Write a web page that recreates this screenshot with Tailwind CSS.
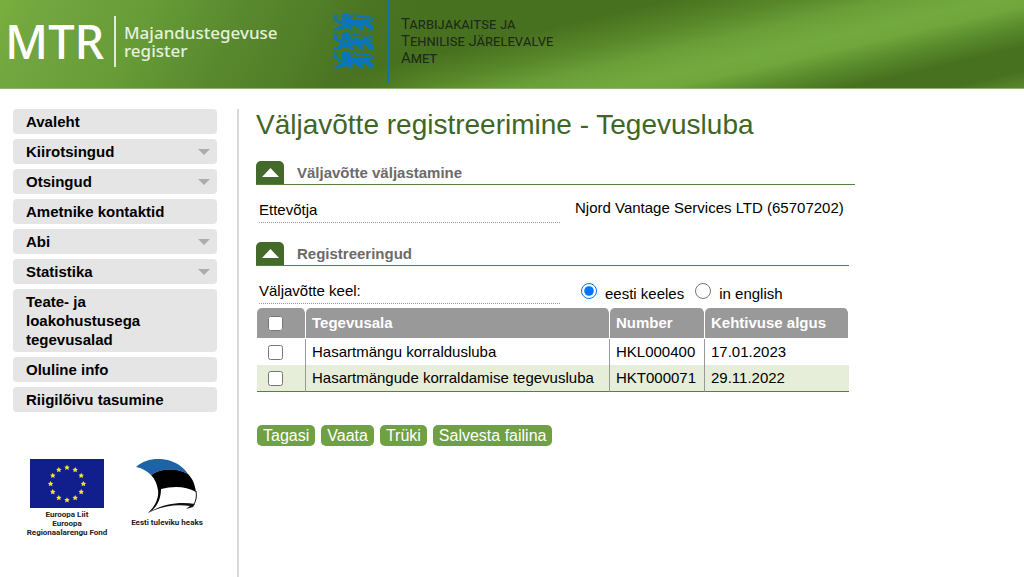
<!DOCTYPE html>
<html lang="et">

<head>
    <meta charset="UTF-8">
    <meta name="viewport" content="width=device-width, initial-scale=1.0">
    <title>Väljavõtte registreerimine - MTR</title>
    <script src="https://cdn.jsdelivr.net/npm/@tailwindcss/browser@4"></script>
</head>

<body class="min-h-screen flex flex-col bg-white text-black font-['Liberation_Sans',Arial,sans-serif] text-[15px]">

    <header class="relative h-[89px] border-b border-[#8fb573]">
        <svg class="absolute inset-0 w-full h-full" viewBox="0 0 1024 88" preserveAspectRatio="none" aria-hidden="true">
            <defs>
                <linearGradient id="band" gradientUnits="userSpaceOnUse" x1="0" y1="0" x2="75" y2="322">
                    <stop offset="0" stop-color="#48711f" />
                    <stop offset=".46" stop-color="#48711f" />
                    <stop offset=".54" stop-color="#588629" />
                    <stop offset=".61" stop-color="#6a9f38" />
                    <stop offset=".68" stop-color="#73aa3f" />
                    <stop offset=".72" stop-color="#70a63b" />
                    <stop offset=".78" stop-color="#588a2c" />
                    <stop offset=".84" stop-color="#48711f" />
                    <stop offset=".91" stop-color="#48711f" />
                    <stop offset="1" stop-color="#669a37" />
                </linearGradient>
                <linearGradient id="glow" gradientUnits="userSpaceOnUse" x1="0" y1="0" x2="368" y2="184">
                    <stop offset="0" stop-color="#78b03c" />
                    <stop offset=".1" stop-color="#71a640" />
                    <stop offset=".34" stop-color="#669b36" />
                    <stop offset=".54" stop-color="#59892e" />
                    <stop offset=".7" stop-color="#517e28" />
                    <stop offset=".8" stop-color="#4b7522" />
                    <stop offset="1" stop-color="#48711f" stop-opacity="0" />
                </linearGradient>
            </defs>
            <rect width="1024" height="88" fill="url(#band)" />
            <rect width="1024" height="88" fill="url(#glow)" />
        </svg>
        <div class="relative flex h-full">
            <a href="#" class="flex items-start w-[332px] pl-[5px] pt-4 text-white font-['Noto_Sans',sans-serif]">
                <span class="w-[109px] font-medium text-[47px] leading-[50px]">MTR</span>
                <span class="w-[2px] h-[51px] bg-white/80"></span>
                <span class="flex flex-col pl-2 pt-2 font-medium text-[17px] leading-[18px] text-[#e6f0dc]">
                    <span>Majandustegevuse</span>
                    <span>register</span>
                </span>
            </a>
            <a href="#" class="flex items-start text-[#1f2a1a]">
                <svg class="w-[43px] h-[58px] mt-3" viewBox="0 0 43 58" fill="#0a76b8" stroke="#0a76b8" stroke-linecap="round" stroke-linejoin="round" aria-hidden="true">
                    <defs>
                        <g id="lion">
                            <path stroke="none" d="M9 4 10.500 2 14 1 17.500 2 19 5 18.800 8 24 7 29 8 34 6.500 37.500 8 38.500 11.500 41.500 14.500 42 18.300 36 18.300 37 16.500 34 14.500 32 13 30 14 31.500 16 31.500 18.300 26.500 18.300 27 16.500 24 14.500 20.500 14 20.500 16.500 23 18.300 17 18.300 16.500 16 12.500 16.500 7.500 18.300 1 18.300 2 16.500 5.500 16 7 13.500 10.500 12.500 7.500 12 4.500 10 1 7.500 2 5 4.500 6 6.500 8.500 9 9Z" />
                            <path fill="none" stroke-width="1.500" d="M37.500 9C41.500 9.500 41.500 6 38 5 33 4 27 5.500 22.500 3M20.500 4 23 2M2 2.500 3.500 5.500M5.500 2.500 5 6" />
                            <path fill="none" stroke="#4a7322" stroke-width=".6" d="M11.800 5h1.200M15 5h1.200M12.800 9.500h2.500M19.500 9v4M9.500 10.500l2 1.500" />
                        </g>
                    </defs>
                    <use href="#lion" />
                    <use href="#lion" y="19" />
                    <use href="#lion" y="38" />
                </svg>
                <span class="w-[2px] h-[83px] ml-3 bg-[#0a76b8]"></span>
                <span class="pl-3 pt-4 font-['Roboto',sans-serif] text-[15px] leading-[17px] [font-variant:small-caps]">Tarbijakaitse ja<br>Tehnilise Järelevalve<br>Amet</span>
            </a>
        </div>
    </header>

    <div class="flex flex-1 pt-5">
        <aside class="w-[237px] shrink-0 pl-[13px] pr-5">
            <nav>
                <ul class="flex flex-col gap-[5px] font-bold leading-[19px]">
                    <li><a href="#" class="block rounded-[4px] bg-[#e5e5e5] py-[3px] pl-[13px] pr-2">Avaleht</a></li>
                    <li><a href="#" class="flex items-center justify-between rounded-[4px] bg-[#e5e5e5] py-[3px] pl-[13px] pr-[7px]">Kiirotsingud
                            <svg class="w-3 h-[6px]" viewBox="0 0 12 6"><path fill="#adadad" d="M0 0h12L6 6z" /></svg></a></li>
                    <li><a href="#" class="flex items-center justify-between rounded-[4px] bg-[#e5e5e5] py-[3px] pl-[13px] pr-[7px]">Otsingud
                            <svg class="w-3 h-[6px]" viewBox="0 0 12 6"><path fill="#adadad" d="M0 0h12L6 6z" /></svg></a></li>
                    <li><a href="#" class="block rounded-[4px] bg-[#e5e5e5] py-[3px] pl-[13px] pr-2">Ametnike kontaktid</a></li>
                    <li><a href="#" class="flex items-center justify-between rounded-[4px] bg-[#e5e5e5] py-[3px] pl-[13px] pr-[7px]">Abi
                            <svg class="w-3 h-[6px]" viewBox="0 0 12 6"><path fill="#adadad" d="M0 0h12L6 6z" /></svg></a></li>
                    <li><a href="#" class="flex items-center justify-between rounded-[4px] bg-[#e5e5e5] py-[3px] pl-[13px] pr-[7px]">Statistika
                            <svg class="w-3 h-[6px]" viewBox="0 0 12 6"><path fill="#adadad" d="M0 0h12L6 6z" /></svg></a></li>
                    <li><a href="#" class="block rounded-[4px] bg-[#e5e5e5] py-[3px] pl-[13px] pr-2">Teate- ja<br>loakohustusega<br>tegevusalad</a></li>
                    <li><a href="#" class="block rounded-[4px] bg-[#e5e5e5] py-[3px] pl-[13px] pr-2">Oluline info</a></li>
                    <li><a href="#" class="block rounded-[4px] bg-[#e5e5e5] py-[3px] pl-[13px] pr-2">Riigilõivu tasumine</a></li>
                </ul>
            </nav>

            <div class="flex gap-5 pl-3 mt-[47px] font-['Roboto',sans-serif] font-bold text-[8px] leading-[9px] text-center text-[#222] whitespace-nowrap">
                <div class="w-[84px] flex flex-col items-center">
                    <svg class="w-[74px] h-[49px] mb-[2px]" viewBox="0 0 74 49" aria-hidden="true">
                        <rect width="74" height="49" fill="#101f8c" />
                        <defs><path id="star" fill="#f0e62a" d="M0-2.800.9-1 2.700-.8 1.400.5 1.800 2.500 0 1.600-1.800 2.500-1.400.5-2.700-.8-.9-1z" /></defs>
                        <use href="#star" x="37" y="8.500" />
                        <use href="#star" x="45.200" y="10.700" />
                        <use href="#star" x="51.200" y="16.500" />
                        <use href="#star" x="53.400" y="24.700" />
                        <use href="#star" x="51.200" y="32.800" />
                        <use href="#star" x="45.200" y="38.700" />
                        <use href="#star" x="37" y="41" />
                        <use href="#star" x="28.800" y="38.700" />
                        <use href="#star" x="22.800" y="32.800" />
                        <use href="#star" x="20.600" y="24.700" />
                        <use href="#star" x="22.800" y="16.500" />
                        <use href="#star" x="28.800" y="10.700" />
                    </svg>
                    Euroopa Liit<br>Euroopa<br>Regionaalarengu Fond
                </div>
                <div class="w-[76px] flex flex-col items-center">
                    <svg class="w-[62px] h-[55px] mb-1" viewBox="0 0 62 55" aria-hidden="true">
                        <path fill="#1d63a8" d="M0 8C9 0 22-2 35 2 43 5 49 10 52 15 40 9 26 9 15 16 11 12 6 9 0 8z" />
                        <path fill="#000" d="M15 16C26 9 40 9 52 15 57 20 59 26 60 33 50 27 37 27 25 30 25 41 20 50 12 54 20 46 23 38 22 31 21 25 19 20 15 16z" />
                        <path fill="none" stroke="#111" stroke-width="1" d="M60 32c1 5 0 10-2 13" />
                        <path fill="#111" d="M12 54C24 46 42 42 59 45l-2 3-7 2 4-3C40 45 25 47 12 54z" />
                    </svg>
                    Eesti tuleviku heaks
                </div>
            </div>
        </aside>

        <main class="flex-1 border-l-2 border-[#d9d9d9] pl-[17px]">
            <h1 class="text-[28px] leading-8 text-[#3f6626]">Väljavõtte registreerimine - Tegevusluba</h1>

            <form>
                <section class="mt-5 max-w-[599px]">
                    <div class="flex items-end border-b border-[#56803c]">
                        <button type="button" aria-label="Sulge Väljavõtte väljastamine" class="w-7 h-[23px] flex items-center justify-center rounded-t-[5px] bg-[#436a2a]">
                            <svg class="w-[17px] h-[9px]" viewBox="0 0 17 9"><path fill="#fff" d="M0 9 8.500 0 17 9z" /></svg>
                        </button>
                        <h2 class="pl-[13px] font-bold leading-[23px] text-[#6b6b6b]">Väljavõtte väljastamine</h2>
                    </div>
                    <div class="flex items-start gap-[15px] pt-[13px] pl-[3px]">
                        <div class="w-[301px] leading-6 border-b border-dotted border-[#999]">Ettevõtja</div>
                        <div class="leading-5">Njord Vantage Services LTD (65707202)</div>
                    </div>
                </section>

                <section class="mt-[19px] max-w-[593px]">
                    <div class="flex items-end border-b border-[#56803c]">
                        <button type="button" aria-label="Sulge Registreeringud" class="w-7 h-[23px] flex items-center justify-center rounded-t-[5px] bg-[#436a2a]">
                            <svg class="w-[17px] h-[9px]" viewBox="0 0 17 9"><path fill="#fff" d="M0 9 8.500 0 17 9z" /></svg>
                        </button>
                        <h2 class="pl-[13px] font-bold leading-[23px] text-[#6b6b6b]">Registreeringud</h2>
                    </div>
                    <div class="flex items-start pt-[13px] pl-[3px]">
                        <div id="keel" class="w-[301px] leading-6 border-b border-dotted border-[#999]">Väljavõtte keel:</div>
                        <div role="radiogroup" aria-labelledby="keel" class="flex pl-[21px] pt-1">
                            <input type="radio" id="et" name="keel" checked class="size-[16px]">
                            <label for="et" class="pl-2 pr-[11px] leading-[22px]">eesti keeles</label>
                            <input type="radio" id="en" name="keel" class="size-[16px]">
                            <label for="en" class="pl-2 leading-[22px]">in english</label>
                        </div>
                    </div>

                    <div class="pl-px pt-[3px]">
                    <table class="w-full border-separate border-spacing-0 text-left">
                        <thead>
                            <tr class="h-[31px] text-white">
                                <th class="w-[49px] pl-[11px] rounded-t-[5px] bg-[#999] bg-clip-padding border-b border-r border-white"><input type="checkbox" aria-label="Vali kõik" class="block size-[15px]"></th>
                                <th class="w-[304px] px-[6px] rounded-t-[5px] bg-[#999] bg-clip-padding border-b border-r border-white">Tegevusala</th>
                                <th class="w-[95px] px-[6px] rounded-t-[5px] bg-[#999] bg-clip-padding border-b border-r border-white">Number</th>
                                <th class="px-[6px] rounded-t-[5px] bg-[#999] bg-clip-padding border-b border-r border-white">Kehtivuse algus</th>
                            </tr>
                        </thead>
                        <tbody>
                            <tr class="h-[26px]">
                                <td class="pl-[11px] border-r border-[#999]"><input type="checkbox" aria-label="Vali HKL000400" class="block size-[15px]"></td>
                                <td class="px-[6px] border-r border-[#999]">Hasartmängu korraldusluba</td>
                                <td class="px-[6px] border-r border-[#999]">HKL000400</td>
                                <td class="px-[6px]">17.01.2023</td>
                            </tr>
                            <tr class="h-[27px] bg-[#e6eed9]">
                                <td class="pl-[11px] border-r border-r-[#999] border-b border-b-[#56803c]"><input type="checkbox" aria-label="Vali HKT000071" class="block size-[15px]"></td>
                                <td class="px-[6px] border-r border-r-[#999] border-b border-b-[#56803c]">Hasartmängude korraldamise tegevusluba</td>
                                <td class="px-[6px] border-r border-r-[#999] border-b border-b-[#56803c]">HKT000071</td>
                                <td class="px-[6px] border-b border-b-[#56803c]">29.11.2022</td>
                            </tr>
                        </tbody>
                    </table>
                    </div>
                </section>

                <div class="flex gap-[6px] mt-[33px] pl-px text-[16px] leading-[21px] text-white">
                    <button type="button" class="rounded-[5px] bg-[#6fa044] px-[6px]">Tagasi</button>
                    <button type="button" class="rounded-[5px] bg-[#6fa044] px-[6px]">Vaata</button>
                    <button type="button" class="rounded-[5px] bg-[#6fa044] px-[6px]">Trüki</button>
                    <button type="button" class="rounded-[5px] bg-[#6fa044] px-[6px]">Salvesta failina</button>
                </div>
            </form>
        </main>
    </div>

</body>

</html>
